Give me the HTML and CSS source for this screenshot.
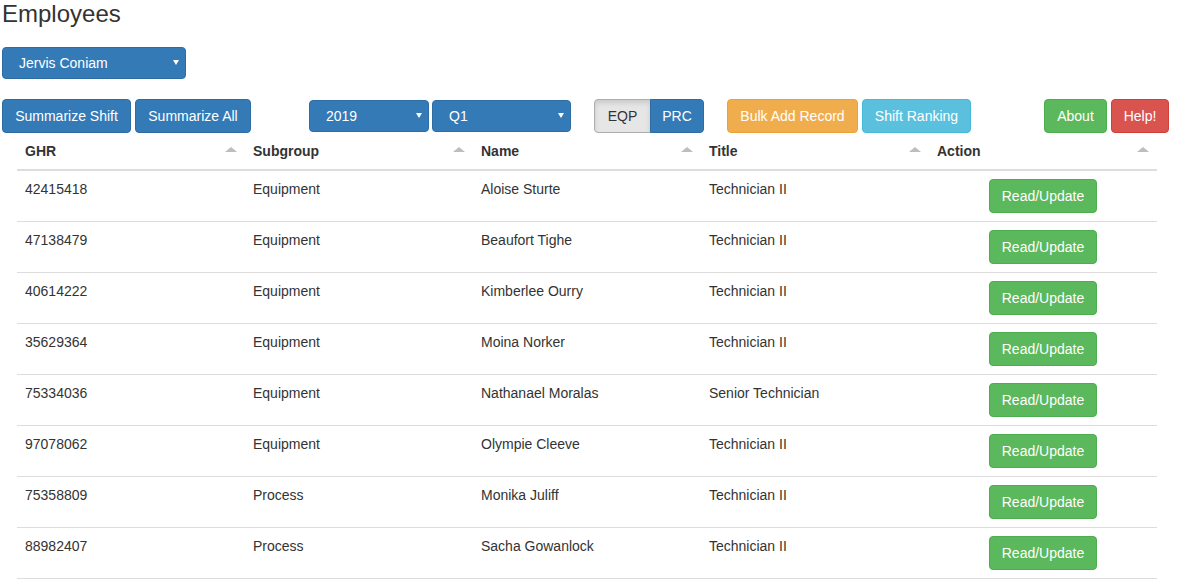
FILE: index.html
```html
<!DOCTYPE html>
<html lang="en">
<head>
<meta charset="utf-8">
<title>Employees</title>
<link rel="stylesheet" href="styles.css">
</head>
<body>
<div class="page">
  <h1 class="title">Employees</h1>

  <div class="select-wrap select-employee">
    <select class="select"><option>Jervis Coniam</option></select>
  </div>

  <div class="toolbar">
    <button class="btn btn-primary w-shift">Summarize Shift</button>
    <button class="btn btn-primary w-all gap4">Summarize All</button>

    <div class="select-wrap select-year">
      <select class="select"><option>2019</option></select>
    </div>
    <div class="select-wrap select-quarter">
      <select class="select"><option>Q1</option></select>
    </div>

    <div class="btn-group">
      <button class="btn btn-default active seg-left">EQP</button>
      <button class="btn btn-primary seg-right">PRC</button>
    </div>

    <button class="btn btn-warning w-bulk bulk">Bulk Add Record</button>
    <button class="btn btn-info w-rank gap4">Shift Ranking</button>

    <button class="btn btn-success w-about about">About</button>
    <button class="btn btn-danger w-help gap4">Help!</button>
  </div>

  <table class="grid">
    <thead>
      <tr>
        <th><div class="th-inner"><span>GHR</span><span class="sort"></span></div></th>
        <th><div class="th-inner"><span>Subgroup</span><span class="sort"></span></div></th>
        <th><div class="th-inner"><span>Name</span><span class="sort"></span></div></th>
        <th><div class="th-inner"><span>Title</span><span class="sort"></span></div></th>
        <th><div class="th-inner"><span>Action</span><span class="sort"></span></div></th>
      </tr>
    </thead>
    <tbody>
      <tr><td>42415418</td><td>Equipment</td><td>Aloise Sturte</td><td>Technician II</td><td class="action"><button class="btn btn-success">Read/Update</button></td></tr>
      <tr><td>47138479</td><td>Equipment</td><td>Beaufort Tighe</td><td>Technician II</td><td class="action"><button class="btn btn-success">Read/Update</button></td></tr>
      <tr><td>40614222</td><td>Equipment</td><td>Kimberlee Ourry</td><td>Technician II</td><td class="action"><button class="btn btn-success">Read/Update</button></td></tr>
      <tr><td>35629364</td><td>Equipment</td><td>Moina Norker</td><td>Technician II</td><td class="action"><button class="btn btn-success">Read/Update</button></td></tr>
      <tr><td>75334036</td><td>Equipment</td><td>Nathanael Moralas</td><td>Senior Technician</td><td class="action"><button class="btn btn-success">Read/Update</button></td></tr>
      <tr><td>97078062</td><td>Equipment</td><td>Olympie Cleeve</td><td>Technician II</td><td class="action"><button class="btn btn-success">Read/Update</button></td></tr>
      <tr><td>75358809</td><td>Process</td><td>Monika Juliff</td><td>Technician II</td><td class="action"><button class="btn btn-success">Read/Update</button></td></tr>
      <tr><td>88982407</td><td>Process</td><td>Sacha Gowanlock</td><td>Technician II</td><td class="action"><button class="btn btn-success">Read/Update</button></td></tr>
    </tbody>
  </table>
</div>
</body>
</html>
```

FILE: styles.css
```css
* { box-sizing: border-box; }

html, body {
  margin: 0;
  padding: 0;
  background: #fff;
}

body {
  font-family: "Liberation Sans", Arial, Helvetica, sans-serif;
  font-size: 14px;
  line-height: 1.42857;
  color: #333;
}

.page {
  padding: 1px 0 0 2px;
}

.title {
  margin: 0;
  font-size: 24px;
  font-weight: 400;
  line-height: 26px;
  color: #333;
}

/* selects */
.select-wrap {
  position: relative;
  display: inline-block;
}

.select-wrap::after {
  content: "";
  position: absolute;
  right: 7px;
  top: 50%;
  margin-top: -3px;
  border-left: 3px solid transparent;
  border-right: 3px solid transparent;
  border-top: 5px solid #fff;
}

.select {
  -webkit-appearance: none;
  appearance: none;
  display: block;
  width: 100%;
  height: 32px;
  margin: 0;
  padding: 0 24px 0 16px;
  font-family: inherit;
  font-size: 14px;
  color: #fff;
  background: #337ab7;
  border: 1px solid #2e6da4;
  border-radius: 4px;
  outline: none;
}

.select-employee {
  width: 184px;
  margin-top: 20px;
}

/* buttons */
.btn {
  display: inline-block;
  height: 34px;
  margin: 0;
  padding: 6px 12px;
  font-family: inherit;
  font-size: 14px;
  line-height: 20px;
  font-weight: 400;
  text-align: center;
  white-space: nowrap;
  border: 1px solid transparent;
  border-radius: 4px;
  cursor: pointer;
}

.btn-primary { color: #fff; background: #337ab7; border-color: #2e6da4; }
.btn-default { color: #333; background: #fff; border-color: #ccc; }
.btn-default.active { background: #e6e6e6; border-color: #adadad; box-shadow: inset 0 3px 5px rgba(0,0,0,.125); }
.btn-warning { color: #fff; background: #f0ad4e; border-color: #eea236; }
.btn-info { color: #fff; background: #5bc0de; border-color: #46b8da; }
.btn-success { color: #fff; background: #5cb85c; border-color: #4cae4c; }
.btn-danger { color: #fff; background: #d9534f; border-color: #d43f3a; }

/* toolbar */
.toolbar {
  display: flex;
  align-items: center;
  margin-top: 20px;
  height: 34px;
}

.toolbar .btn { padding-left: 0; padding-right: 0; }

.w-shift { width: 129px; }
.w-all { width: 116px; }
.w-bulk { width: 131px; }
.w-rank { width: 109px; }
.w-about { width: 63px; }
.w-help { width: 58px; }

.gap4 { margin-left: 4px; }

.select-year { width: 120px; margin-left: 58px; }
.select-quarter { width: 139px; margin-left: 3px; }

.btn-group {
  display: flex;
  margin-left: 23px;
}

.seg-left { width: 57px; border-top-right-radius: 0; border-bottom-right-radius: 0; }
.seg-right { width: 54px; border-top-left-radius: 0; border-bottom-left-radius: 0; margin-left: -1px; }

.bulk { margin-left: 23px; }
.about { margin-left: 73px; }

/* table */
.grid {
  width: 1140px;
  margin-left: 15px;
  border-collapse: collapse;
  table-layout: fixed;
}

.grid th,
.grid td {
  width: 228px;
  padding: 8px;
  text-align: left;
  vertical-align: top;
  line-height: 20px;
}

.grid th {
  font-weight: 700;
  border-bottom: 2px solid #ddd;
}

.grid td {
  border-bottom: 1px solid #ddd;
}

.th-inner {
  display: flex;
  justify-content: space-between;
  align-items: center;
}

.sort {
  width: 0;
  height: 0;
  margin-bottom: 3px;
  border-left: 6px solid transparent;
  border-right: 6px solid transparent;
  border-bottom: 5px solid #bdbdbd;
}

.grid td.action {
  text-align: center;
}

.grid td.action .btn {
  width: 108px;
  padding: 6px 0;
}
```
